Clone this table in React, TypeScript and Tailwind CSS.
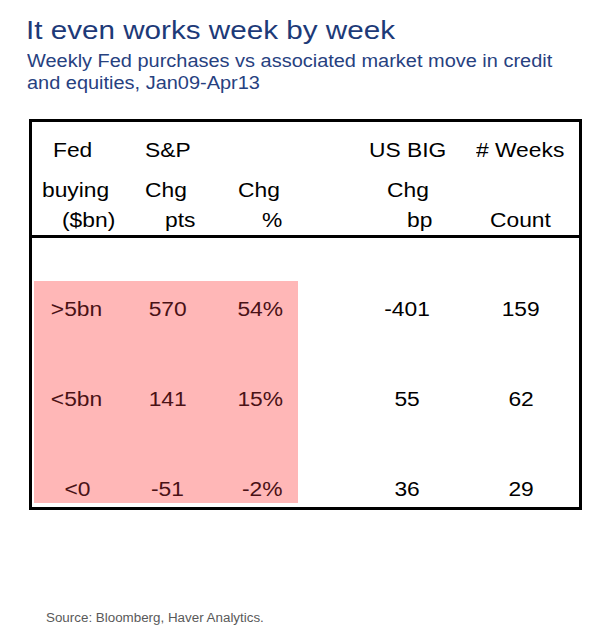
import React from "react";

const L = ({ children, pl = "" }: { children?: React.ReactNode; pl?: string }) => (
  <div className={`whitespace-nowrap ${pl}`}>
    {children ? <span className="inline-block origin-left scale-x-[1.14]">{children}</span> : null}
  </div>
);

const C = ({ children }: { children: React.ReactNode }) => (
  <div className="whitespace-nowrap text-center">
    <span className="inline-block scale-x-[1.14]">{children}</span>
  </div>
);

const R = ({ children }: { children: React.ReactNode }) => (
  <div className="whitespace-nowrap text-right pr-[15px]">
    <span className="inline-block origin-right scale-x-[1.14]">{children}</span>
  </div>
);

const pinkRows = [
  [">5bn", "570", "54%"],
  ["<5bn", "141", "15%"],
  ["<0", "-51", "-2%"],
];
const whiteRows = [
  ["-401", "159"],
  ["55", "62"],
  ["36", "29"],
];

export default function App() {
  return (
    <div className="w-[600px] h-[630px] bg-white font-['Liberation_Sans',Arial,sans-serif] overflow-hidden">
      <div className="pt-[15px] pl-[26px] text-[26px] leading-[30px] text-[#1d3a78] whitespace-nowrap">
        <span className="inline-block origin-left scale-x-[1.14]">It even works week by week</span>
      </div>
      <div className="mt-[5px] pl-[27px] text-[17.5px] leading-[22px] text-[#27417f] whitespace-nowrap">
        <div className="origin-left scale-x-[1.14]">
          Weekly Fed purchases vs associated market move in credit
          <br />
          and equities, Jan09-Apr13
        </div>
      </div>

      <div className="mt-[25px] ml-[29px] w-[553px] h-[391px] border-[3px] border-black text-[20px] leading-[24px] text-black">
        <div className="h-[116px] border-b-[3px] border-black pt-[16px]">
          <div className="grid grid-cols-[108px_90px_130px_110px_109px] h-[24px]">
            <L pl="pl-[21px]">Fed</L>
            <L pl="pl-[5px]">S&amp;P</L>
            <L />
            <L pl="pl-[9px]">US BIG</L>
            <L pl="pl-[6px]"># Weeks</L>
          </div>
          <div className="grid grid-cols-[108px_90px_130px_110px_109px] h-[24px] mt-[16px]">
            <L pl="pl-[10px]">buying</L>
            <L pl="pl-[5px]">Chg</L>
            <L pl="pl-[8px]">Chg</L>
            <L pl="pl-[27px]">Chg</L>
            <L />
          </div>
          <div className="grid grid-cols-[108px_90px_130px_110px_109px] h-[24px] mt-[6px]">
            <L pl="pl-[30px]">($bn)</L>
            <L pl="pl-[25px]">pts</L>
            <L pl="pl-[32px]">%</L>
            <L pl="pl-[47px]">bp</L>
            <L pl="pl-[20px]">Count</L>
          </div>
        </div>

        <div className="flex h-[269px]">
          <div className="ml-[2px] mt-[43px] w-[264px] h-[222px] bg-[#ffb7b7] pt-[16px] text-[#4a1216] flex flex-col gap-[66px]">
            {pinkRows.map((r, i) => (
              <div key={i} className="grid grid-cols-[86px_95px_83px] h-[24px]">
                <C>{r[0]}</C>
                <C>{r[1]}</C>
                <R>{r[2]}</R>
              </div>
            ))}
          </div>
          <div className="mt-[43px] pt-[16px] pl-[52px] flex flex-col gap-[66px]">
            {whiteRows.map((r, i) => (
              <div key={i} className="grid grid-cols-[115px_112px] h-[24px]">
                <C>{r[0]}</C>
                <C>{r[1]}</C>
              </div>
            ))}
          </div>
        </div>
      </div>

      <div className="mt-[100px] pl-[46px] text-[12.5px] leading-[16px] text-[#595959] whitespace-nowrap">
        <span className="inline-block origin-left scale-x-[1.07]">Source: Bloomberg, Haver Analytics.</span>
      </div>
    </div>
  );
}
